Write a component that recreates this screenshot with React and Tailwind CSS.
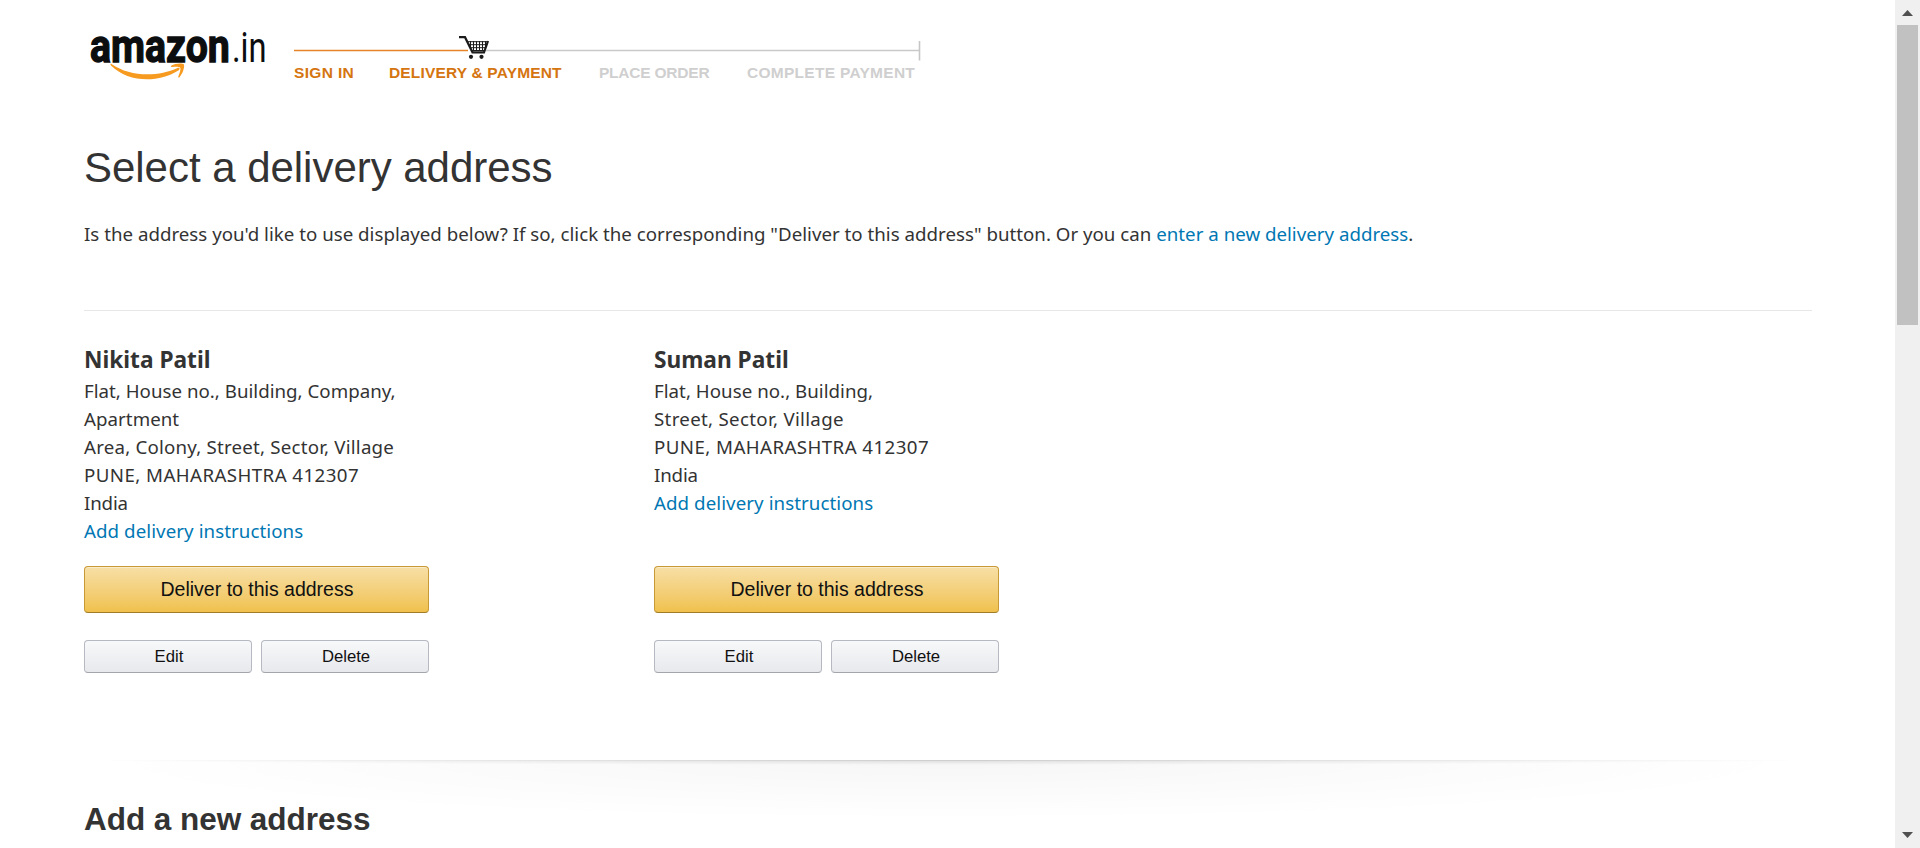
const STEPS = [
  { label: "SIGN IN", className: "w-[95px] tracking-[0.35px] text-[#d57510]" },
  { label: "DELIVERY & PAYMENT", className: "w-[210px] tracking-[0.17px] text-[#d57510]" },
  { label: "PLACE ORDER", className: "w-[148px] tracking-[-0.22px] text-[#cfcfcf]" },
  { label: "COMPLETE PAYMENT", className: "tracking-[0.28px] text-[#cfcfcf]" },
];

const ADDRESSES = [
  {
    name: "Nikita Patil",
    lines: [
      { text: "Flat, House no., Building, Company,", className: "tracking-[0.02px]" },
      { text: "Apartment", className: "tracking-[0.05px]" },
      { text: "Area, Colony, Street, Sector, Village", className: "tracking-[0.21px]" },
    ],
  },
  {
    name: "Suman Patil",
    lines: [
      { text: "Flat, House no., Building,", className: "tracking-[0.04px]" },
      { text: "Street, Sector, Village", className: "tracking-[0.31px]" },
    ],
  },
];

function Logo() {
  return (
    <svg className="h-[75px] w-[188px] shrink-0" viewBox="0 -10 188 75" role="img" aria-label="amazon.in">
      <text transform="translate(6 37.300) scale(0.863 1)" fontSize="45.5" fontWeight="700" fill="#0b0d0e" stroke="#0b0d0e" strokeWidth="1.300" fontFamily="Roboto, sans-serif">amazon</text>
      <text transform="translate(148 37.300) scale(0.76 1)" fontSize="43" fontWeight="400" fill="#0b0d0e" fontFamily="Roboto, sans-serif">.in</text>
      <path d="M27.500 39 C46 52 74 52 93.500 43 C95.500 42.300 96.500 43.800 94.800 45.200 C74 58.500 44 57.500 27 40.500 C26 39.300 26.500 38.500 27.500 39Z" fill="#f79a20" />
      <path d="M87.200 40.700 C91 38.200 98.500 37.900 99.800 39.300 C101 41 99 48.500 95.500 52.200 C94.700 52.900 93.900 52.500 94.300 51.500 C95.800 47.800 97 44 96.200 42.800 C95.200 41.500 91.500 41.700 88.200 42 C87 42.100 86.400 41.300 87.200 40.700Z" fill="#f79a20" />
    </svg>
  );
}

function ProgressTrack() {
  return (
    <svg className="block h-[32px] w-[628px]" viewBox="0 0 628 32" aria-hidden="true">
      <path d="M0 15.500H174" stroke="#e58428" strokeWidth="1.600" />
      <path d="M192 15.500H625" stroke="#c9c9c9" strokeWidth="1.600" />
      <path d="M625.500 6V25.500" stroke="#c6c6c6" strokeWidth="1.600" />
      <path d="M165 2.200H171L178.500 17.300H190L194 6" fill="none" stroke="#1b1b1b" strokeWidth="2.200" />
      <path d="M173.500 6.700H194M174.500 9.700H193M176 12.700H192M178 15.500H191" stroke="#1b1b1b" strokeWidth="1" />
      <path d="M176.500 6V15M179.500 6V16M182.500 6V16M185.500 6V16M188.500 6V16M191.500 6V14" stroke="#1b1b1b" strokeWidth="1" />
      <circle cx="177" cy="21.800" r="2.100" fill="#1b1b1b" />
      <circle cx="187.500" cy="21.800" r="2.100" fill="#1b1b1b" />
    </svg>
  );
}

function SmallButton({ children }) {
  return (
    <button className="flex h-[33px] w-[168px] items-center justify-center rounded-[4px] border border-[#b6b9c1] border-b-[#a2a6ac] bg-linear-to-b from-[#f7f8fa] to-[#e7e9ec] pl-[2px] font-['Liberation_Sans',Arial,sans-serif] text-[16.7px] leading-5 text-[#111111]">
      {children}
    </button>
  );
}

function AddressCard({ name, lines }) {
  return (
    <section className="flex w-[345px] flex-col">
      <h2 className="mb-px pt-px text-[22.7px] leading-8 font-bold">{name}</h2>
      {lines.map((line) => (
        <p key={line.text} className={`whitespace-nowrap ${line.className}`}>{line.text}</p>
      ))}
      <p className="tracking-[0.43px]">PUNE, MAHARASHTRA 412307</p>
      <p className="tracking-[-0.15px]">India</p>
      <a className="tracking-[0.08px] text-[#0077b3]">Add delivery instructions</a>
      <div className="mt-auto">
        <button className="flex h-[47px] w-full items-center justify-center rounded-[4px] border border-[#c89a35] border-b-[#a07c26] bg-linear-to-b from-[#f7dfa5] to-[#f0c14b] pb-[2px] pl-px font-['Liberation_Sans',Arial,sans-serif] text-[19.5px] leading-7 text-[#111111] shadow-[inset_0_1px_0_rgba(255,255,255,0.4)]">
          Deliver to this address
        </button>
        <div className="mt-[27px] flex justify-between">
          <SmallButton>Edit</SmallButton>
          <SmallButton>Delete</SmallButton>
        </div>
      </div>
    </section>
  );
}

function Scrollbar() {
  return (
    <div className="flex w-[25px] shrink-0 flex-col items-center bg-[#f0f0f0]">
      <svg className="h-[25px] w-[25px]" viewBox="0 0 25 25" aria-hidden="true">
        <path d="M7 16L12.500 10L18 16Z" fill="#505050" />
      </svg>
      <div className="h-[300px] w-[21px] bg-[#c1c1c1]" />
      <svg className="mt-auto h-[25px] w-[25px]" viewBox="0 0 25 25" aria-hidden="true">
        <path d="M7 9L12.500 15L18 9Z" fill="#505050" />
      </svg>
    </div>
  );
}

export default function App() {
  return (
    <div className="flex h-[848px] overflow-hidden bg-white font-['Noto_Sans',sans-serif] text-[18.7px] leading-7 text-[#333333]">
      <main className="flex min-w-0 flex-1 flex-col pl-[84px]">
        <header className="flex h-[142px] pt-[15px]">
          <Logo />
          <div className="ml-[22px] pt-[20px]">
            <ProgressTrack />
            <div className="-mt-[2px] flex font-['Liberation_Sans',Arial,sans-serif] text-[15.5px] leading-4 font-bold whitespace-nowrap">
              {STEPS.map((step) => (
                <span key={step.label} className={step.className}>{step.label}</span>
              ))}
            </div>
          </div>
        </header>
        <h1 className="font-['Liberation_Sans',Arial,sans-serif] text-[42px] leading-[52px] tracking-[-0.03px]">Select a delivery address</h1>
        <p className="mt-[26px] tracking-[0.015px] whitespace-nowrap">
          Is the address you'd like to use displayed below? If so, click the corresponding "Deliver to this address" button. Or you can{" "}
          <a className="text-[#0077b3]">enter a new delivery address</a>.
        </p>
        <div className="mt-[62px] h-px w-[1728px] shrink-0 bg-[#e7e7e7]" />
        <div className="mt-8 flex h-[330px] shrink-0 gap-[225px]">
          {ADDRESSES.map((address) => (
            <AddressCard key={address.name} {...address} />
          ))}
        </div>
        <div className="mt-[87px] h-[88px] w-[1728px] shrink-0 bg-[radial-gradient(ellipse_50%_5px_at_50%_0,rgba(0,0,0,0.11),transparent),radial-gradient(ellipse_50%_60px_at_50%_0,rgba(0,0,0,0.035),transparent)]">
          <div className="h-px bg-linear-to-r from-transparent via-black/7 to-transparent" />
          <h2 className="pt-[38px] font-['Liberation_Sans',Arial,sans-serif] text-[31.5px] leading-10 font-bold tracking-[-0.04px]">Add a new address</h2>
        </div>
      </main>
      <Scrollbar />
    </div>
  );
}
